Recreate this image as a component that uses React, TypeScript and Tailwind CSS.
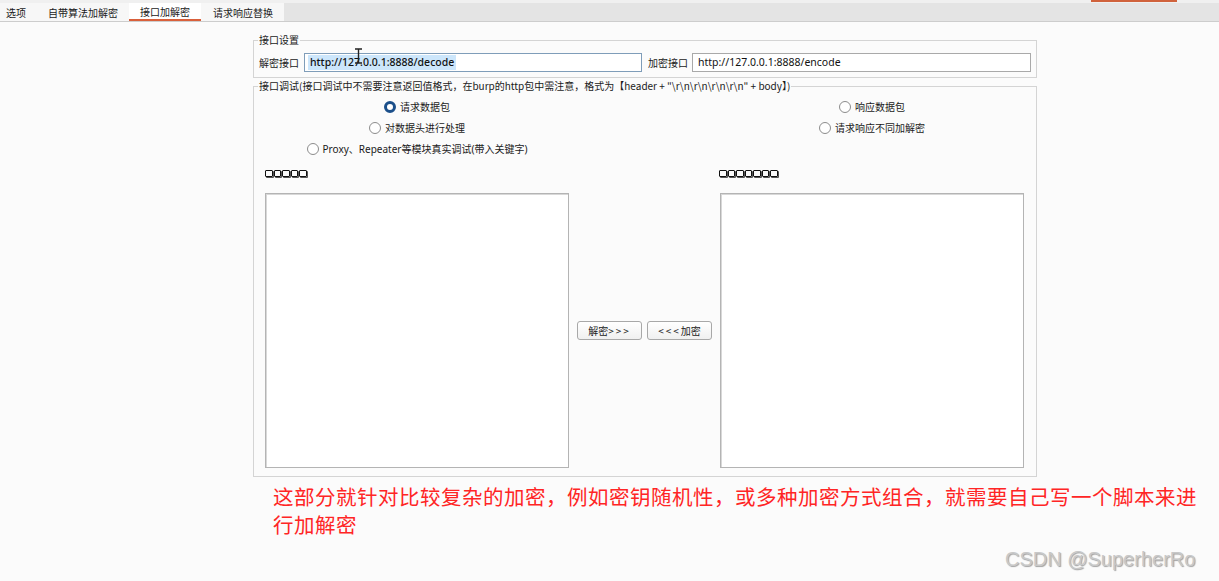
import React from "react";

const ui = { fontFamily: '"Noto Sans", "Noto Sans CJK SC", sans-serif' };
const cjk = { fontFamily: '"Noto Sans CJK SC", "Noto Sans", sans-serif' };

function Radio({ label, checked }: { label: string; checked?: boolean }) {
  return (
    <div className="flex items-center gap-[4px] text-[10px] text-[#1a1a1a]" style={ui}>
      {checked ? (
        <span className="inline-block w-[12px] h-[12px] rounded-full border-[3px] border-[#1b4f8a] bg-white" />
      ) : (
        <span className="inline-block w-[12px] h-[12px] rounded-full border border-[#8c8c8c] bg-white" />
      )}
      <span className="leading-[12px]">{label}</span>
    </div>
  );
}

function Tofu({ n }: { n: number }) {
  return (
    <div className="flex items-center gap-[1px] h-[14px]">
      {Array.from({ length: n }).map((_, i) => (
        <span
          key={i}
          className="inline-block w-[7.5px] h-[7px] border border-[#111] rounded-[1px] shadow-[1px_1px_0_#555]"
        />
      ))}
    </div>
  );
}

export default function App() {
  return (
    <div className="relative w-[1219px] min-h-[581px] bg-[#fbfbfb] overflow-hidden" style={ui}>
      {/* Tab bar */}
      <div className="h-[3px] bg-[#f0f0f0] flex">
        <div className="ml-[1091px] w-[86px] h-[2px] bg-[#d0623c]" />
      </div>
      <div className="flex h-[19px] bg-[#e4e4e4] border-b border-[#cdcdcd]">
        <div className="flex bg-[#f7f7f7] text-[10px] text-[#1a1a1a]" style={cjk}>
          <div className="pl-[6px] pr-[11px] flex items-center">选项</div>
          <div className="px-[11px] flex items-center">自带算法加解密</div>
          <div className="px-[11px] flex items-center border-b-2 border-[#d9603b] bg-white">接口加解密</div>
          <div className="pl-[12px] pr-[11px] flex items-center">请求响应替换</div>
        </div>
      </div>

      {/* Main panels */}
      <div className="ml-[253px] w-[784px]">
        <fieldset className="mt-[11px] border border-[#d4d4d4] px-[5px] pb-[5px] pt-[6px]">
          <legend className="ml-[-1px] px-[1px] text-[10px] leading-[14px] text-[#1a1a1a]" style={cjk}>
            接口设置
          </legend>
          <div className="flex items-center text-[10px]">
            <span className="w-[40px] text-[#1a1a1a]" style={cjk}>解密接口</span>
            <div className="relative ml-[5px] w-[338px] h-[19px] border border-[#7f9db9] bg-white flex items-center pl-[3px]">
              <span className="bg-[#cce6fb] px-[2px] text-[10.5px] font-medium text-[#111] leading-[15px]">
                http://127.0.0.1:8888/decode
              </span>
              <svg className="absolute left-[49px] top-[-6px]" width="9" height="16" viewBox="0 0 9 16">
                <path d="M1 1h7M4.5 1v14M1 15h7" stroke="#222" strokeWidth="1.4" fill="none" />
              </svg>
            </div>
            <span className="ml-[6px] w-[40px] text-[#1a1a1a]" style={cjk}>加密接口</span>
            <div className="ml-[4px] w-[339px] h-[19px] border border-[#a9a9a9] bg-white flex items-center pl-[5px]">
              <span className="text-[10.5px] text-[#111]">http://127.0.0.1:8888/encode</span>
            </div>
          </div>
        </fieldset>

        <fieldset className="mt-[1px] border border-[#d4d4d4] pb-[8px]">
          <legend className="ml-[4px] px-[1px] text-[10px] leading-[14px] text-[#1a1a1a]" style={cjk}>
            接口调试(接口调试中不需要注意返回值格式，在burp的http包中需注意，格式为【header + "\r\n\r\n\r\n\r\n" + body】)
          </legend>
          <div className="grid grid-cols-[304px_151px_304px] px-[11px] pt-[3px]">
            <div className="h-[21px] flex items-center justify-center">
              <Radio label="请求数据包" checked />
            </div>
            <div />
            <div className="h-[21px] flex items-center justify-center">
              <Radio label="响应数据包" />
            </div>

            <div className="h-[21px] flex items-center justify-center">
              <Radio label="对数据头进行处理" />
            </div>
            <div />
            <div className="h-[21px] flex items-center justify-center">
              <Radio label="请求响应不同加解密" />
            </div>

            <div className="h-[21px] flex items-center justify-center">
              <Radio label="Proxy、Repeater等模块真实调试(带入关键字)" />
            </div>
            <div />
            <div />

            <div className="mt-[7px]">
              <Tofu n={5} />
            </div>
            <div />
            <div className="mt-[7px] ml-[-1px]">
              <Tofu n={7} />
            </div>

            <div className="mt-[13px] h-[275px] bg-white border border-[#b4b4b4] shadow-[inset_1px_1px_0_#d8d8d8]" />
            <div className="mt-[13px] flex items-center justify-center gap-[5px]">
              <button
                className="w-[65px] h-[19px] rounded-[3px] border border-[#a8a8a8] bg-gradient-to-b from-white to-[#f0f0f0] text-[10px] text-[#1a1a1a] leading-[17px]"
                style={cjk}
              >
                解密<span className="tracking-[2px]">&gt;&gt;&gt;</span>
              </button>
              <button
                className="w-[65px] h-[19px] rounded-[3px] border border-[#a8a8a8] bg-gradient-to-b from-white to-[#f0f0f0] text-[10px] text-[#1a1a1a] leading-[17px]"
                style={cjk}
              >
                <span className="tracking-[2px]">&lt;&lt;&lt;</span>加密
              </button>
            </div>
            <div className="mt-[13px] h-[275px] bg-white border border-[#b4b4b4] shadow-[inset_1px_1px_0_#d8d8d8]" />
          </div>
        </fieldset>

        <p
          className="ml-[20px] mt-[5px] w-[946px] whitespace-nowrap text-[20.5px] tracking-[0.5px] leading-[28px] text-[#ff2525]"
          style={cjk}
        >
          这部分就针对比较复杂的加密，例如密钥随机性，或多种加密方式组合，就需要自己写一个脚本来进
          <br />
          行加解密
        </p>
      </div>

      <div
        className="absolute left-[1005px] top-[544px] text-[20px] text-[#c8c8c8] [text-shadow:1px_1px_1px_#a0a0a0]"
        style={{ fontFamily: '"Liberation Sans", Arial, sans-serif' }}
      >
        CSDN @SuperherRo
      </div>
    </div>
  );
}
